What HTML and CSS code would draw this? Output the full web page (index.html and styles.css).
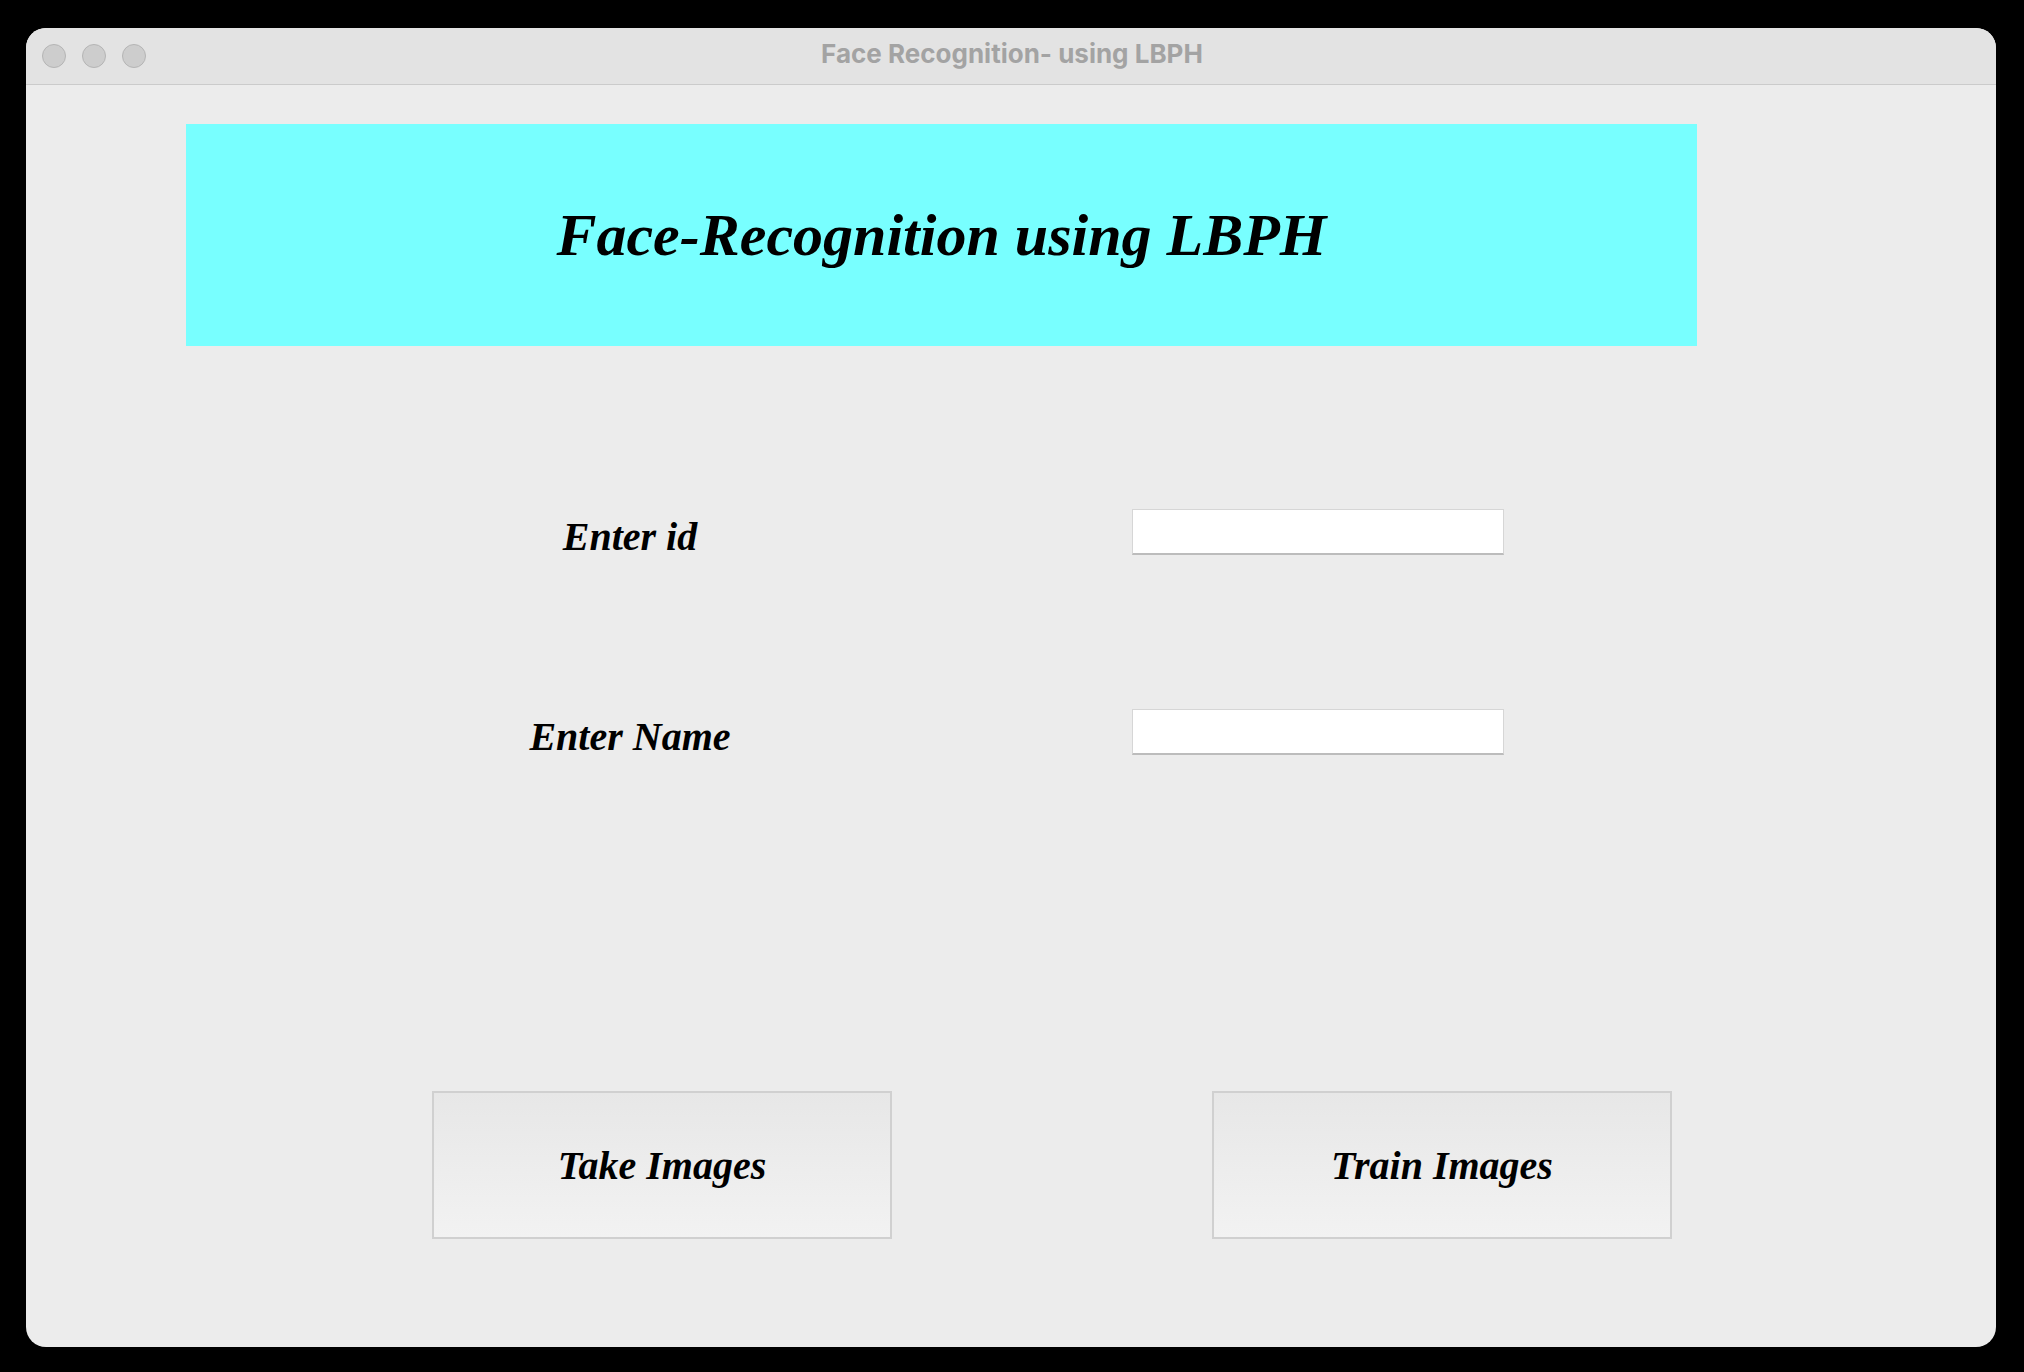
FILE: index.html
```html
<!DOCTYPE html>
<html lang="en">

<head>
    <meta charset="UTF-8">
    <meta name="viewport" content="width=device-width, initial-scale=1.0">
    <title>Face Recognition- using LBPH</title>
    <link rel="stylesheet" href="styles.css">
</head>

<body>

    <div class="window">
        <div class="titlebar">
            <div class="lights">
                <span class="light"></span>
                <span class="light"></span>
                <span class="light"></span>
            </div>
            <div class="wintitle">Face Recognition- using LBPH</div>
        </div>

        <div class="content">
            <div class="banner">
                <h1>Face-Recognition using LBPH</h1>
            </div>

            <div class="form">
                <label class="label" for="uid">Enter id</label>
                <input class="entry" id="uid" type="text">

                <label class="label" for="uname">Enter Name</label>
                <input class="entry" id="uname" type="text">
            </div>

            <div class="actions">
                <button class="button">Take Images</button>
                <button class="button">Train Images</button>
            </div>
        </div>
    </div>

</body>

</html>
```

FILE: styles.css
```css
html, body {
    height: 100%;
}

body {
    margin: 0;
    padding: 28px 28px 25px 26px;
    box-sizing: border-box;
    background: #000000;
    display: flex;
}

.window {
    flex: 1;
    display: flex;
    flex-direction: column;
    background: #ececec;
    border-radius: 20px;
    overflow: hidden;
}

.titlebar {
    position: relative;
    height: 56px;
    flex-shrink: 0;
    background: #e3e3e3;
    border-bottom: 1px solid #cbcbcb;
    display: flex;
    align-items: center;
    justify-content: center;
}

.lights {
    position: absolute;
    left: 16px;
    top: 16px;
    display: flex;
    gap: 16px;
}

.light {
    width: 22px;
    height: 22px;
    border-radius: 50%;
    background: #cdcdcd;
    border: 1px solid #b4b4b4;
}

.wintitle {
    font-family: Inter, "Noto Sans", sans-serif;
    font-weight: 700;
    font-size: 26px;
    color: #a3a3a3;
    padding-left: 2px;
    margin-top: -5px;
}

.content {
    flex: 1;
    padding: 39px 0 0 160px;
}

.banner {
    width: 1511px;
    height: 222px;
    background: #78ffff;
    display: flex;
    align-items: center;
    justify-content: center;
}

.banner h1 {
    margin: 0;
    font-family: "Liberation Serif", "Times New Roman", serif;
    font-style: italic;
    font-weight: bold;
    font-size: 60px;
    color: #000000;
}

.form {
    display: grid;
    grid-template-columns: 400px 372px;
    grid-template-rows: 46px 46px;
    column-gap: 302px;
    row-gap: 154px;
    margin: 163px 0 0 244px;
}

.label {
    font-family: "Liberation Serif", "Times New Roman", serif;
    font-style: italic;
    font-weight: bold;
    font-size: 40px;
    line-height: 46px;
    text-align: center;
    margin-top: 5px;
}

.entry {
    width: 372px;
    height: 46px;
    box-sizing: border-box;
    background: #ffffff;
    border: 1px solid #d6d6d6;
    border-bottom: 2px solid #bcbcbc;
    margin: 0;
    padding: 0 6px;
    font-size: 20px;
    outline: none;
}

.actions {
    display: flex;
    gap: 320px;
    margin: 336px 0 0 246px;
}

.button {
    width: 460px;
    height: 148px;
    margin: 0;
    background: linear-gradient(#e7e7e7, #f2f2f2);
    border: 2px solid #d0d0d0;
    border-radius: 0;
    font-family: "Liberation Serif", "Times New Roman", serif;
    font-style: italic;
    font-weight: bold;
    font-size: 40px;
    color: #000000;
    padding: 0;
}
```
